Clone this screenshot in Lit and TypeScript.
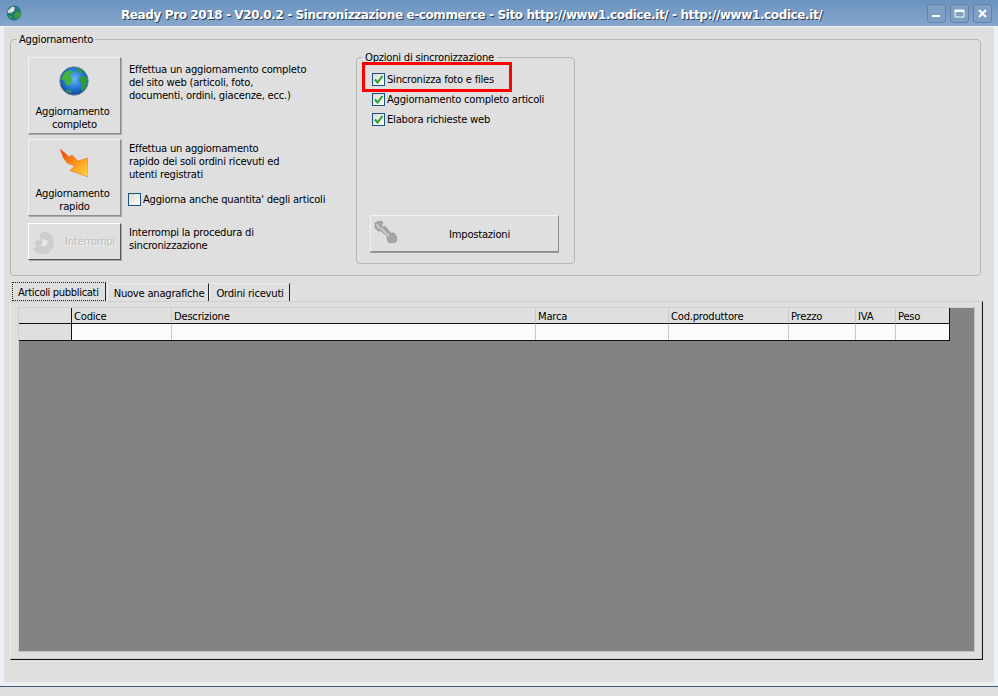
import { LitElement, html, css, svg } from "lit";
import { customElement } from "lit/decorators.js";

const globe = html`<svg class="ico gl" viewBox="0 0 32 32" width="30" height="30">
  <defs><radialGradient id="gb" cx="50%" cy="42%" r="60%"><stop offset="0" stop-color="#6db6f2"/><stop offset=".6" stop-color="#1f74d6"/><stop offset="1" stop-color="#0c3f9a"/></radialGradient></defs>
  <circle cx="16" cy="16" r="15.2" fill="url(#gb)" stroke="#7d8a98" stroke-width="1"/>
  <path d="M2 14 L6 7 L12 4 L15 7 L11 9 L14 13 L12 20 L8 21 L6 16 Z" fill="#43b43a"/>
  <path d="M18 2 L25 4 L25 8 L20 7 Z M22 12 L27 10 L30 14 L29 22 L25 27 L23 24 L25 19 L21 16 Z M7 25 L13 26 L13 29 L9 28 Z" fill="#2f9a3a"/>
</svg>`;

const bolt = html`<svg class="ico boltico" viewBox="0 0 28 28" width="28" height="28">
  <defs><linearGradient id="bg" x1="0" y1="0" x2="1" y2="1"><stop offset="0" stop-color="#e8400e"/><stop offset=".45" stop-color="#ff8a14"/><stop offset="1" stop-color="#ffdc40"/></linearGradient></defs>
  <path d="M0 0 L5 4 L9 8 L12 6 L18 12 L28 9 L28 28 L10 21.5 L15 17 L7 14 L3.5 9 Z" fill="url(#bg)" stroke="#e8661a" stroke-width=".5"/>
</svg>`;

const stop = html`<svg viewBox="0 0 22 22" width="22" height="22">
  <path d="M12 0 C18 0 21 5 21 11 C21 17 16 22 10 22 C6 22 2 20 0 17 L4 14 L1 11 L4 8 L6 9 L8 6 L6 3 L8 1 Z" fill="#cdcdcd"/>
  <path d="M10 7 L15 9 L13 14 L8 14 Z" fill="#e6e6e6"/>
</svg>`;

const wrench = html`<svg viewBox="0 0 23 22" width="23" height="22">
  <path d="M1 2 L5 0 L8 0 L9 3 L7 4 L9 6 L11 5 L17 12 L20 12 L23 16 L23 20 L20 22 L15 22 L13 18 L13 15 L7 10 L4 10 L1 7 Z" fill="#a6a6a6" stroke="#8a8a8a" stroke-width=".5"/>
  <path d="M3 3 L4 6 L8 8 L15 15" stroke="#d8d8d8" stroke-width="1.3" fill="none"/>
</svg>`;

const appIcon = html`<svg viewBox="0 0 16 16" width="16" height="16">
  <circle cx="8" cy="8" r="7.4" fill="#1c7c7c"/>
  <path d="M1.5 6 L6 1.5 L9 2.5 L8 6 L5 8 L2 8 Z" fill="#d8d8d0"/>
  <path d="M10 7 L15 7 L14 12 L10 14 L8 11 Z M3 10 L6 11 L6 14 L3 12 Z" fill="#3f9a3a"/>
  <circle cx="6" cy="5" r="1.5" fill="#f0f0f0"/>
</svg>`;

const tick = svg`<path d="M2 5.5 L4.5 8.5 L9.5 2" fill="none" stroke="#21a121" stroke-width="2"/>`;

const columns = ["Codice", "Descrizione", "Marca", "Cod.produttore", "Prezzo", "IVA", "Peso"];

@customElement("app-root")
export class AppRoot extends LitElement {
  static styles = css`
    :host { display: block; width: 998px; height: 696px; overflow: hidden; background: #dfdfdf;
      font: 10px/13px "DejaVu Sans", sans-serif; letter-spacing: -0.23px; color: #000; }
    .win { height: 687px; display: flex; flex-direction: column; border-bottom: 1px solid #3d5f85; box-sizing: border-box; }
    .titlebar { flex: none; height: 26px; display: flex; align-items: center; position: relative;
      background: linear-gradient(#6a93bf, #86a6cc); border-bottom: 1px solid #f4f4f4; box-sizing: content-box; }
    .appico { margin: 0 0 0 6px; height: 16px; }
    .title { position: absolute; left: 121px; top: 8px; font: bold 12px/14px "DejaVu Sans", sans-serif; white-space: nowrap;
      color: #fff; text-shadow: 1px 1px 0 #2c3e55; letter-spacing: -0.39px; }
    .wbtns { margin-left: auto; margin-right: 6px; display: flex; gap: 4px; margin-top: 1px; }
    .wbtn { width: 19px; height: 19px; box-sizing: border-box; border: 1px solid #5f83ab; border-radius: 3px;
      background: #7f9fc4; display: flex; align-items: center; justify-content: center; }
    .body { flex: 1; min-height: 0; display: flex; flex-direction: column; padding: 6px 5px 0 6px;
      border-left: 4px solid #eaf0f5; border-right: 4px solid #eef1f4; border-bottom: 4px solid #ececec; box-sizing: border-box; }
    fieldset { margin: 0; min-width: 0; border: 1px solid #b5b5b5; border-radius: 4px; box-sizing: border-box; }
    legend { line-height: 13px; }
    .main { width: 971px; height: 243px; padding: 11px 17px 0; display: flex; }
    .main > legend { margin-left: -11px; padding: 0 2px; }
    .actions { width: 328px; display: flex; flex-direction: column; gap: 5px; }
    .row { display: flex; gap: 8px; }
    .row.last { margin-top: 2px; }
    .btn { flex: none; width: 93px; box-sizing: border-box; display: flex; flex-direction: column; align-items: center;
      text-align: center; background: #dfdfdf; border: 1px solid; border-color: #f2f2f2 #8e8e8e #8e8e8e #f2f2f2;
      box-shadow: 1px 1px 0 #a8a8a8; }
    .big { height: 77px; }
    .big .ico { margin-top: 8px; display: block; }
    .big .gl { margin-left: -1px; }
    .big .boltico { margin-top: 9px; margin-bottom: 1px; margin-left: -1px; }
    .big > span { margin-top: 9px; }
    .big .l1 { display: inline-block; padding-right: 4px; }
    .dis { height: 37px; flex-direction: row; color: #c0c0c0; padding-left: 4px; gap: 10px;
      border-color: #fff #555 #555 #fff; text-shadow: 1px 1px 0 #f2f2f2; }
    .dis svg { margin-top: 2px; }
    .desc { padding-top: 3px; }
    .desc.first { padding-top: 6px; }
    .desc p { margin: 0; }
    .chk { display: flex; align-items: center; gap: 2px; height: 13px; white-space: nowrap; }
    .box { flex: none; width: 13px; height: 13px; box-sizing: border-box; border: 1px solid #1c5180;
      background: linear-gradient(135deg, #dcdcd6, #fdfdfb); display: block; }
    .qty { margin-top: 12px; margin-left: -1px; }
    .opts { position: relative; width: 219px; height: 213px; padding: 9px 13px 0 15px; margin-top: -6px; display: flex; flex-direction: column; }
    .opts > legend { margin-left: -10px; padding: 0 3px; }
    .list { display: flex; flex-direction: column; gap: 7px; }
    .imp { flex: none; margin-top: auto; margin-bottom: 11px; width: 189px; height: 37px; margin-left: -2px; display: flex; align-items: center;
      box-sizing: border-box; padding-left: 30px; background: #dfdfdf; border: 1px solid; border-color: #f2f2f2 #8e8e8e #8e8e8e #f2f2f2; box-shadow: 0 1px 0 #9a9a9a; position: relative; }
    .imp svg { position: absolute; left: 3px; top: 5px; }
    .imp span { width: 100%; text-align: center; padding-top: 1px; }
    .mark { position: absolute; left: 5px; top: -2px; width: 150px; height: 30px; box-sizing: border-box; border: 3px solid #f00; }
    .tabs { display: flex; align-items: flex-end; height: 19px; margin-top: 6px; padding-left: 2px; flex: none; }
    .tab { height: 18px; display: flex; align-items: center; border-right: 1px solid #222; padding-top: 1px;
      border-top: 1px solid #e9e9e9; border-left: 1px solid #efefef; box-sizing: border-box; white-space: nowrap; }
    .t1 { height: 19px; outline: 1px dotted #222; outline-offset: -1px; padding: 0 6px 0 5px; margin-right: 1px; letter-spacing: -0.35px;
      border-color: transparent #222 transparent transparent; }
    .t2 { padding-left: 6px; padding-right: 4px; }
    .t3 { padding-left: 6px; padding-right: 5px; }
    .panel { flex: none; width: 973px; height: 359px; box-sizing: border-box; padding: 5px 7px;
      border: 1px solid #efefef; border-right: 1px solid #111; border-bottom: 1px solid #111; border-top-color: #cfcfcf;
      box-shadow: inset -1px -1px 0 #cfcfcf; }
    .area { height: 345px; background: #858285; box-sizing: border-box; border: 1px solid #c0c0c0; border-top-color: #d0d0d0; border-left-color: #d0d0d0; }
    .grid { width: 931px; display: grid; grid-template-columns: 53px 100px 364px 133px 120px 67px 40px 53px; grid-template-rows: 16px 16px;
      border-right: 1px solid #111; border-bottom: 1px solid #111; box-sizing: border-box; background: #fdfbfd; }
    .cell { box-sizing: border-box; border-right: 1px solid #c8c8c8; }
    .cell:nth-child(8), .cell:nth-child(16) { border-right: 0; }
    .hd { background: #dfdfdf; padding: 2px 0 0 2px; line-height: 13px; border-bottom: 1px solid #111; white-space: nowrap; }
    .rh { background: #dfdfdf; padding: 0; border-right: 1px solid #111; }
  `;

  private check(label: string, on: boolean) {
    return html`<div class="chk"><svg class="box" viewBox="0 0 11 11">${on ? tick : null}</svg><span>${label}</span></div>`;
  }

  render() {
    return html`<div class="win">
      <div class="titlebar">
        <div class="appico">${appIcon}</div>
        <div class="title">Ready Pro 2018 - V20.0.2 - Sincronizzazione e-commerce - Sito http://www1.codice.it/ - http://www1.codice.it/</div>
        <div class="wbtns">
          <div class="wbtn"><svg width="11" height="11" viewBox="0 0 11 11"><rect x="1" y="7" width="8" height="2" fill="#fff"/></svg></div>
          <div class="wbtn"><svg width="11" height="11" viewBox="0 0 11 11"><path d="M1 2h9v7H1z" fill="none" stroke="#fff"/><rect x="1" y="2" width="9" height="2" fill="#fff"/></svg></div>
          <div class="wbtn"><svg width="11" height="11" viewBox="0 0 11 11"><path d="M2 2l7 7M9 2L2 9" stroke="#fff" stroke-width="2"/></svg></div>
        </div>
      </div>
      <div class="body">
        <fieldset class="main">
          <legend>Aggiornamento</legend>
          <div class="actions">
            <div class="row">
              <div class="btn big">${globe}<span><span class="l1">Aggiornamento</span><br />completo</span></div>
              <div class="desc first"><p>Effettua un aggiornamento completo<br />del sito web (articoli, foto,<br />documenti, ordini, giacenze, ecc.)</p></div>
            </div>
            <div class="row">
              <div class="btn big">${bolt}<span><span class="l1">Aggiornamento</span><br />rapido</span></div>
              <div class="desc"><p>Effettua un aggiornamento<br />rapido dei soli ordini ricevuti ed<br />utenti registrati</p>
                <div class="qty">${this.check("Aggiorna anche quantita' degli articoli", false)}</div></div>
            </div>
            <div class="row last">
              <div class="btn dis">${stop}<span>Interrompi</span></div>
              <div class="desc"><p>Interrompi la procedura di<br />sincronizzazione</p></div>
            </div>
          </div>
          <fieldset class="opts">
            <legend>Opzioni di sincronizzazione</legend>
            <div class="list">
              ${this.check("Sincronizza foto e files", true)}
              ${this.check("Aggiornamento completo articoli", true)}
              ${this.check("Elabora richieste web", true)}
            </div>
            <div class="imp">${wrench}<span>Impostazioni</span></div>
            <div class="mark"></div>
          </fieldset>
        </fieldset>
        <div class="tabs">
          <div class="tab t1">Articoli pubblicati</div>
          <div class="tab t2">Nuove anagrafiche</div>
          <div class="tab t3">Ordini ricevuti</div>
        </div>
        <div class="panel">
          <div class="area">
            <div class="grid">
              <div class="cell hd rh"></div>
              ${columns.map((c) => html`<div class="cell hd">${c}</div>`)}
              <div class="cell rh"></div>
              ${columns.map(() => html`<div class="cell"></div>`)}
            </div>
          </div>
        </div>
      </div>
    </div>`;
  }
}
